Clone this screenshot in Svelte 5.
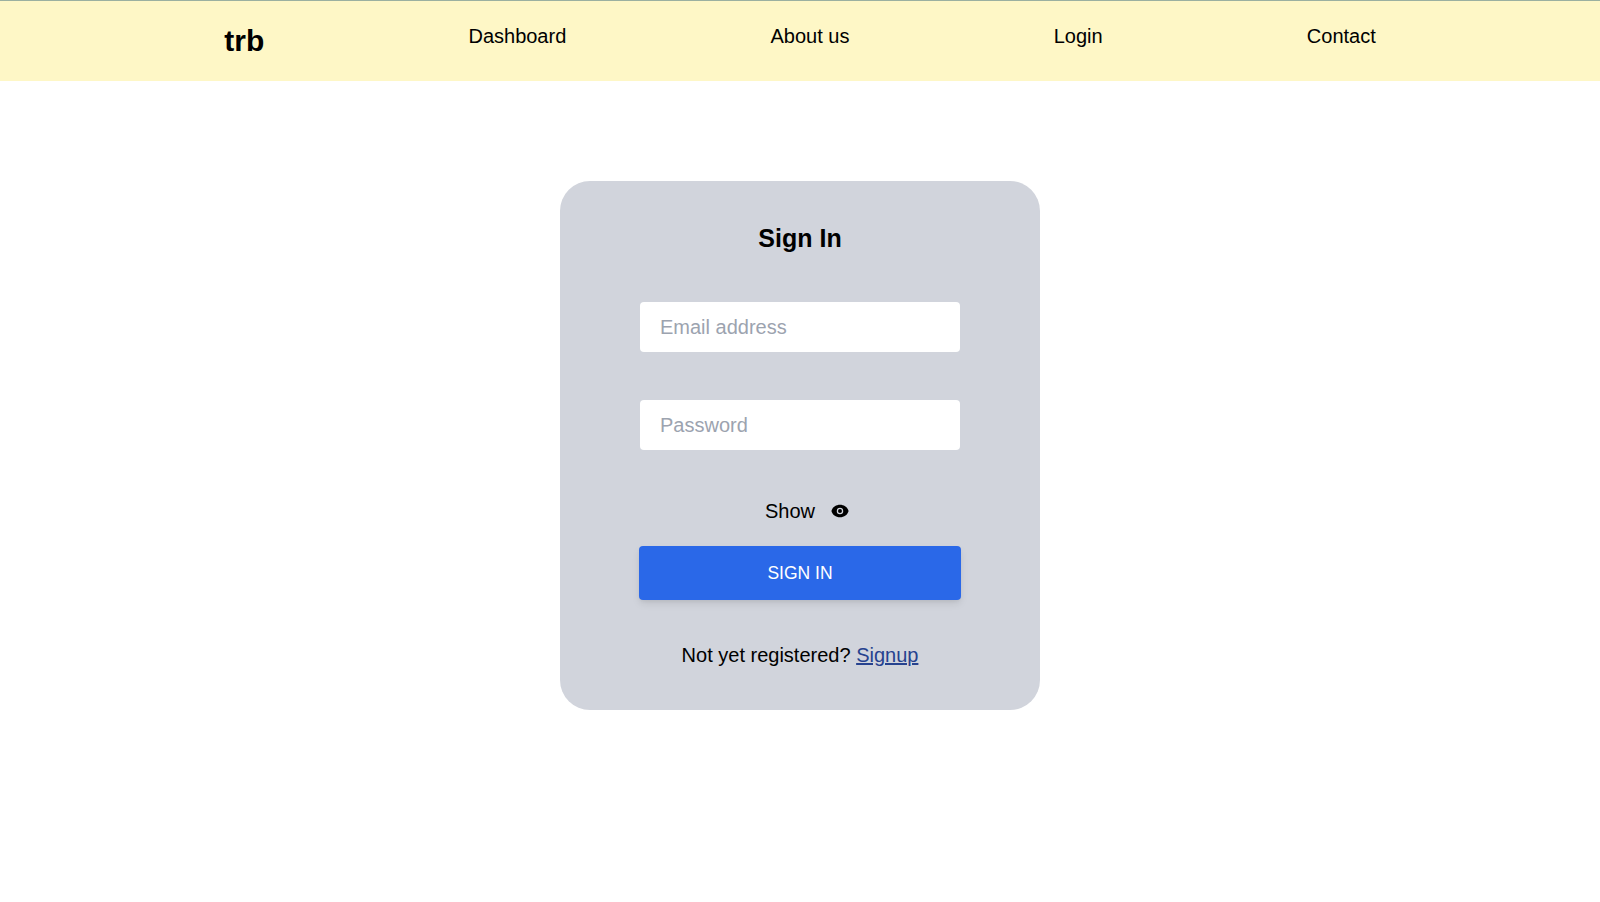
<script lang="ts">
  const links = ['Dashboard', 'About us', 'Login', 'Contact']

  let email = $state('')
  let password = $state('')
  let show = $state(false)
</script>

<header>
  <h1>trb</h1>
  {#each links as link}
    <a class="link" href="#{link}">{link}</a>
  {/each}
</header>

<main>
  <form class="card" onsubmit={(e) => e.preventDefault()}>
    <h2>Sign In</h2>
    <input type="email" placeholder="Email address" bind:value={email} />
    <input type={show ? 'text' : 'password'} placeholder="Password" bind:value={password} />
    <button type="button" class="toggle" onclick={() => (show = !show)}>
      <span>{show ? 'Hide' : 'Show'}</span>
      <svg viewBox="0 0 20 20" fill="currentColor" aria-hidden="true">
        <circle cx="10" cy="10" r="2.2" />
        <path
          fill-rule="evenodd"
          clip-rule="evenodd"
          d="M.458 10C1.5 5.8 5.4 3 10 3s8.5 2.8 9.542 7c-1.042 4.2-4.942 7-9.542 7S1.5 14.2.458 10zM13.6 10a3.6 3.6 0 11-7.2 0 3.6 3.6 0 017.2 0z"
        />
      </svg>
    </button>
    <button type="submit" class="submit">SIGN IN</button>
    <p>Not yet registered? <a class="signup" href="#signup">Signup</a></p>
  </form>
</main>

<style>
  :global(body) {
    background: #fff;
    color: #000;
    font-family: 'Liberation Sans', Arial, sans-serif;
    font-size: 20px;
    line-height: 30px;
  }

  header {
    box-sizing: border-box;
    height: 81px;
    display: flex;
    justify-content: space-evenly;
    align-items: flex-start;
    padding: 20px;
    background: #fef7c6;
    border-top: 1px solid #9bb0a0;
  }

  h1 {
    margin: 0;
    font-size: 30px;
    line-height: 40px;
  }

  .link {
    color: inherit;
    text-decoration: none;
  }

  main {
    display: flex;
    justify-content: center;
    padding-top: 100px;
  }

  .card {
    box-sizing: border-box;
    width: 480px;
    display: flex;
    flex-direction: column;
    align-items: center;
    padding: 40px 79px;
    background: #d1d4dc;
    border-radius: 30px;
  }

  h2 {
    margin: 0 0 46px;
    font-size: 25px;
    line-height: 35px;
  }

  input {
    box-sizing: border-box;
    width: 320px;
    height: 50px;
    margin: 0 0 48px;
    padding: 0 20px;
    border: none;
    border-radius: 4px;
    background: #fff;
    font: inherit;
  }

  input::placeholder {
    color: #9ca3af;
    opacity: 1;
  }

  button {
    border: none;
    font-family: inherit;
    cursor: pointer;
  }

  .toggle {
    display: flex;
    align-items: center;
    gap: 16px;
    margin-top: -2px;
    padding: 0 0 0 14px;
    background: none;
    color: inherit;
    font-size: 20px;
    line-height: 30px;
  }

  .toggle svg {
    width: 18px;
    height: 18px;
  }

  .submit {
    width: 100%;
    height: 54px;
    margin-top: 20px;
    border-radius: 4px;
    background: #2a68e8;
    color: #fff;
    font-size: 17.5px;
    box-shadow: 0 4px 8px -1px rgba(0, 0, 0, 0.1), 0 2px 4px -1px rgba(0, 0, 0, 0.06);
  }

  p {
    margin: 40px 0 0;
  }

  .signup {
    color: #26428f;
  }
</style>
